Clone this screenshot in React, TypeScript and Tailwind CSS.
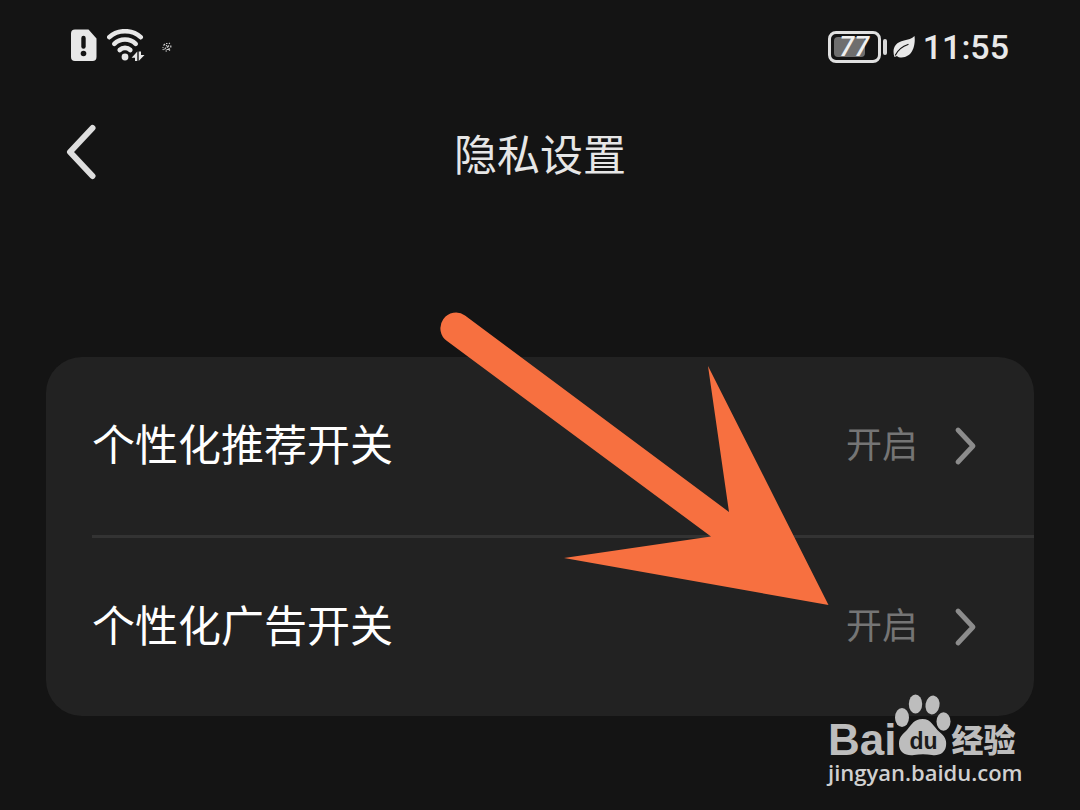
interface SettingRow {
    id: string;
    label: string;
    value: string;
}

const ROWS: SettingRow[] = [
    { id: 'recommend', label: '个性化推荐开关', value: '开启' },
    { id: 'ads', label: '个性化广告开关', value: '开启' },
];

function SimAlertIcon() {
    return (
        <svg width="26" height="34" viewBox="0 0 26 34" aria-hidden="true">
            <path d="M4 .5h13.500l8 9v18.500a4 4 0 0 1-4 4H4a4 4 0 0 1-4-4V4.500a4 4 0 0 1 4-4Z" fill="#e8e8e8" />
            <path d="M12.500 9v8.500" stroke="#141414" strokeWidth="4.400" strokeLinecap="round" />
            <circle cx="12.500" cy="24.500" r="2.800" fill="#141414" />
        </svg>
    );
}

function WifiIcon() {
    return (
        <svg width="38" height="34" viewBox="0 0 38 34" aria-hidden="true">
            <g fill="none" stroke="#e8e8e8" strokeWidth="4.600" strokeLinecap="round">
                <path d="M2.300 8.200C10.500.2 25.500.2 33.700 8.200" />
                <path d="M7.300 14.800C13 9 23 9 28.700 14.800" />
                <path d="M12.700 21C15.500 18.200 20.500 18.200 23.300 21" />
            </g>
            <circle cx="18" cy="28" r="3.400" fill="#e8e8e8" />
            <path d="M30.300 22.500V32H28v-3.300h-3.400Z" fill="#e8e8e8" />
            <path d="M31.700 32v-9.500H34V26h3.500Z" fill="#e8e8e8" />
        </svg>
    );
}

function SpinnerIcon() {
    return (
        <svg width="12" height="12" viewBox="0 0 12 12" fill="none" stroke="#d0d0d0" strokeWidth="1.200" aria-hidden="true">
            <path d="M2.500 4.500 4 3M5 2.500h1.500M8 2l.8.800M9.800 4.500v2M9 8.500l-1 1M6 10H4.500M2.500 9 1.800 8M1.500 6.500h1" />
            <path d="M3.500 8.500 5 6.500M6 6.500l2-2M5.500 8.500h2l1-1.500M5 5l1-.8" />
        </svg>
    );
}

function Battery({ level }: { level: number }) {
    return (
        <div className="flex items-center gap-0.5" aria-label={`电量 ${level}%`}>
            <div className="h-8 w-[53px] rounded-lg border-[3px] border-[#e0e0e0] p-[3px]">
                <div className="relative flex h-5 items-center justify-center">
                    <div className="absolute inset-y-0 left-0 rounded-sm bg-[#6e6e6e]" style={{ width: `${level}%` }} />
                    <span className="relative font-['Roboto',sans-serif] text-[27px] leading-none font-medium text-[#f0f0f0] italic">
                        {level}
                    </span>
                </div>
            </div>
            <div className="h-4 w-1 rounded-sm bg-[#d8d8d8]" />
        </div>
    );
}

function LeafIcon() {
    return (
        <svg width="22" height="24" viewBox="0 0 22 24" aria-hidden="true">
            <path d="M21.500 1c1 7-.5 21-13 21.500-2 0-3.500-.5-4.500-1.500l-2.500 1C-1 15 1 7.500 11 5.500c4-.8 8-2 10.500-4.500Z" fill="#e8e8e8" />
            <path d="M2.500 20C5 15 9 11.500 15 9.500" fill="none" stroke="#141414" strokeWidth="1.300" strokeLinecap="round" />
        </svg>
    );
}

function StatusBar() {
    return (
        <div className="flex h-[94px] items-center justify-between px-[71px]">
            <div className="flex items-center gap-2.5 pb-0.5">
                <SimAlertIcon />
                <WifiIcon />
                <span className="pt-0.5 pl-1.5">
                    <SpinnerIcon />
                </span>
            </div>
            <div className="flex items-center gap-1.5">
                <Battery level={77} />
                <LeafIcon />
                <time className="pl-0.5 font-['Roboto',sans-serif] text-[34px] leading-none font-medium text-[#e8e8e8]">11:55</time>
            </div>
        </div>
    );
}

function Header() {
    return (
        <header className="grid h-[124px] grid-cols-[1fr_auto_1fr] items-center px-[66px] pb-2">
            <button type="button" aria-label="返回" className="justify-self-start">
                <svg width="32" height="56" viewBox="0 0 32 56" fill="none" aria-hidden="true">
                    <path d="M26.500 4 4 28l22.500 24" stroke="#dedede" strokeWidth="6" strokeLinecap="round" strokeLinejoin="round" />
                </svg>
            </button>
            <h1 className="text-[43px] leading-none text-[#e6e6e6]">隐私设置</h1>
        </header>
    );
}

function Row({ label, value }: Omit<SettingRow, 'id'>) {
    return (
        <button type="button" className="flex h-[178px] w-full items-center justify-between pr-14 text-left">
            <span className="pb-2 text-[43px] leading-none text-white">{label}</span>
            <span className="flex items-center gap-9">
                <span className="pb-2 text-4xl leading-none text-[#757575]">{value}</span>
                <svg width="24" height="40" viewBox="0 0 24 40" fill="none" aria-hidden="true">
                    <path d="m4 4 15 16L4 36" stroke="#8c8c8c" strokeWidth="4.800" strokeLinecap="round" strokeLinejoin="round" />
                </svg>
            </span>
        </button>
    );
}

// Points at the value of the last row
function PointerArrow() {
    return (
        <svg
            className="pointer-events-none absolute -top-[45px] right-[205px]"
            width="389"
            height="294"
            viewBox="440 312 389 294"
            aria-hidden="true"
        >
            <path
                d="M465 315.500 729 512 708 366 828.500 605 564 558 711 536.500 447 341A15 15 0 0 1 465 315.500Z"
                fill="#f77040"
            />
        </svg>
    );
}

function Watermark() {
    return (
        <div className="absolute right-[58px] bottom-[22px] flex w-[194px] flex-col text-[#bdbdbd]">
            <div className="flex h-[62px] items-end">
                <span className="font-['Liberation_Sans',sans-serif] text-[44px] leading-8 font-bold">Bai</span>
                <svg className="-ml-0.5" width="57" height="62" viewBox="894 695 57 62" aria-hidden="true">
                    <g fill="#bdbdbd">
                        <ellipse cx="902" cy="718.500" rx="7" ry="9.500" />
                        <ellipse cx="915.500" cy="705" rx="6.700" ry="9.500" />
                        <ellipse cx="932.500" cy="706" rx="7" ry="9.500" transform="rotate(10 932.500 706)" />
                        <ellipse cx="943.500" cy="722.500" rx="7" ry="9.300" />
                        <path d="M922.500 720c9 0 11 8 17 13 5 4 7.500 8 6.500 14-1 7-7 10-14 9-6-1-12-1-18 0-8 1-15-2-15-11 0-7 3-9 8-14 5-6 7-11 15.500-11Z" />
                    </g>
                    <text
                        x="923.500"
                        y="750"
                        textAnchor="middle"
                        fill="#1b1b1b"
                        fontFamily="Liberation Sans, sans-serif"
                        fontSize="23"
                        fontWeight="700"
                    >
                        du
                    </text>
                </svg>
                <span className="pb-0.5 text-[32px] leading-8 font-black">经验</span>
            </div>
            <span className="font-['Open_Sans',sans-serif] text-[22px] leading-8 font-semibold text-[#d0d0d0]">jingyan.baidu.com</span>
        </div>
    );
}

export default function App() {
    return (
        <div className="relative min-h-screen bg-[#141414] font-['Noto_Sans_CJK_SC',sans-serif]">
            <StatusBar />
            <Header />
            <main className="px-[46px] pt-[139px]">
                <section className="relative rounded-[36px] bg-[#222222]">
                    <ul className="divide-y-[3px] divide-[#333333] pl-[46px]">
                        {ROWS.map(({ id, label, value }) => (
                            <li key={id}>
                                <Row label={label} value={value} />
                            </li>
                        ))}
                    </ul>
                    <PointerArrow />
                </section>
            </main>
            <Watermark />
        </div>
    );
}
